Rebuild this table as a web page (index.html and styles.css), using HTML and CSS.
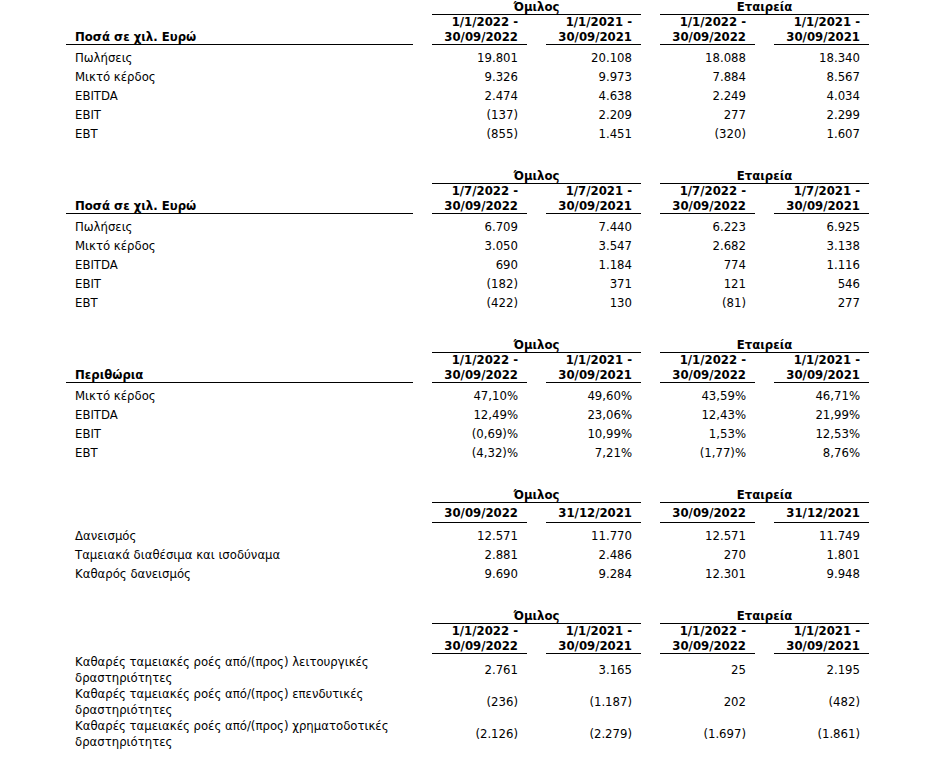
FILE: index.html
```html
<!DOCTYPE html>
<html lang="el">
<head>
<meta charset="utf-8">
<link rel="stylesheet" href="styles.css">
</head>
<body>
<div class="page">

<section class="tbl">
  <div class="blank"></div>
  <div class="grp">Όμιλος</div>
  <div class="grp">Εταιρεία</div>

  <div class="hlabel">Ποσά σε χιλ. Ευρώ</div>
  <div class="hcol">1/1/2022 -<br>30/09/2022</div>
  <div class="hcol">1/1/2021 -<br>30/09/2021</div>
  <div class="hcol">1/1/2022 -<br>30/09/2022</div>
  <div class="hcol">1/1/2021 -<br>30/09/2021</div>

  <div class="lbl">Πωλήσεις</div><div class="num">19.801</div><div class="num">20.108</div><div class="num">18.088</div><div class="num">18.340</div>
  <div class="lbl">Μικτό κέρδος</div><div class="num">9.326</div><div class="num">9.973</div><div class="num">7.884</div><div class="num">8.567</div>
  <div class="lbl">EBITDA</div><div class="num">2.474</div><div class="num">4.638</div><div class="num">2.249</div><div class="num">4.034</div>
  <div class="lbl">EBIT</div><div class="num">(137)</div><div class="num">2.209</div><div class="num">277</div><div class="num">2.299</div>
  <div class="lbl">EBT</div><div class="num">(855)</div><div class="num">1.451</div><div class="num">(320)</div><div class="num">1.607</div>
</section>

<section class="tbl">
  <div class="blank"></div>
  <div class="grp">Όμιλος</div>
  <div class="grp">Εταιρεία</div>

  <div class="hlabel">Ποσά σε χιλ. Ευρώ</div>
  <div class="hcol">1/7/2022 -<br>30/09/2022</div>
  <div class="hcol">1/7/2021 -<br>30/09/2021</div>
  <div class="hcol">1/7/2022 -<br>30/09/2022</div>
  <div class="hcol">1/7/2021 -<br>30/09/2021</div>

  <div class="lbl">Πωλήσεις</div><div class="num">6.709</div><div class="num">7.440</div><div class="num">6.223</div><div class="num">6.925</div>
  <div class="lbl">Μικτό κέρδος</div><div class="num">3.050</div><div class="num">3.547</div><div class="num">2.682</div><div class="num">3.138</div>
  <div class="lbl">EBITDA</div><div class="num">690</div><div class="num">1.184</div><div class="num">774</div><div class="num">1.116</div>
  <div class="lbl">EBIT</div><div class="num">(182)</div><div class="num">371</div><div class="num">121</div><div class="num">546</div>
  <div class="lbl">EBT</div><div class="num">(422)</div><div class="num">130</div><div class="num">(81)</div><div class="num">277</div>
</section>

<section class="tbl">
  <div class="blank"></div>
  <div class="grp">Όμιλος</div>
  <div class="grp">Εταιρεία</div>

  <div class="hlabel">Περιθώρια</div>
  <div class="hcol">1/1/2022 -<br>30/09/2022</div>
  <div class="hcol">1/1/2021 -<br>30/09/2021</div>
  <div class="hcol">1/1/2022 -<br>30/09/2022</div>
  <div class="hcol">1/1/2021 -<br>30/09/2021</div>

  <div class="lbl">Μικτό κέρδος</div><div class="num">47,10%</div><div class="num">49,60%</div><div class="num">43,59%</div><div class="num">46,71%</div>
  <div class="lbl">EBITDA</div><div class="num">12,49%</div><div class="num">23,06%</div><div class="num">12,43%</div><div class="num">21,99%</div>
  <div class="lbl">EBIT</div><div class="num">(0,69)%</div><div class="num">10,99%</div><div class="num">1,53%</div><div class="num">12,53%</div>
  <div class="lbl">EBT</div><div class="num">(4,32)%</div><div class="num">7,21%</div><div class="num">(1,77)%</div><div class="num">8,76%</div>
</section>

<section class="tbl">
  <div class="blank"></div>
  <div class="grp">Όμιλος</div>
  <div class="grp">Εταιρεία</div>

  <div class="blank"></div>
  <div class="hcol single">30/09/2022</div>
  <div class="hcol single">31/12/2021</div>
  <div class="hcol single">30/09/2022</div>
  <div class="hcol single">31/12/2021</div>

  <div class="lbl">Δανεισμός</div><div class="num">12.571</div><div class="num">11.770</div><div class="num">12.571</div><div class="num">11.749</div>
  <div class="lbl">Ταμειακά διαθέσιμα και ισοδύναμα</div><div class="num">2.881</div><div class="num">2.486</div><div class="num">270</div><div class="num">1.801</div>
  <div class="lbl">Καθαρός δανεισμός</div><div class="num">9.690</div><div class="num">9.284</div><div class="num">12.301</div><div class="num">9.948</div>
</section>

<section class="tbl cash">
  <div class="blank"></div>
  <div class="grp">Όμιλος</div>
  <div class="grp">Εταιρεία</div>

  <div class="blank"></div>
  <div class="hcol">1/1/2022 -<br>30/09/2022</div>
  <div class="hcol">1/1/2021 -<br>30/09/2021</div>
  <div class="hcol">1/1/2022 -<br>30/09/2022</div>
  <div class="hcol">1/1/2021 -<br>30/09/2021</div>

  <div class="lbl tall">Καθαρές ταμειακές ροές από/(προς) λειτουργικές<br>δραστηριότητες</div><div class="num tall">2.761</div><div class="num tall">3.165</div><div class="num tall">25</div><div class="num tall">2.195</div>
  <div class="lbl tall">Καθαρές ταμειακές ροές από/(προς) επενδυτικές<br>δραστηριότητες</div><div class="num tall">(236)</div><div class="num tall">(1.187)</div><div class="num tall">202</div><div class="num tall">(482)</div>
  <div class="lbl tall">Καθαρές ταμειακές ροές από/(προς) χρηματοδοτικές<br>δραστηριότητες</div><div class="num tall">(2.126)</div><div class="num tall">(2.279)</div><div class="num tall">(1.697)</div><div class="num tall">(1.861)</div>
</section>

</div>
</body>
</html>
```

FILE: styles.css
```css
html, body {
  margin: 0;
  padding: 0;
  background: #fff;
}

body {
  font-family: "DejaVu Sans", "Liberation Sans", sans-serif;
  font-stretch: condensed;
  font-size: 13px;
  color: #000;
}

.page {
  padding-left: 66px;
  display: flex;
  flex-direction: column;
  gap: 26px;
}

.tbl {
  display: grid;
  grid-template-columns: 347px repeat(4, 95px);
  column-gap: 19px;
}

.blank {
  min-height: 1px;
}

.grp {
  grid-column: span 2;
  text-align: center;
  font-weight: bold;
  line-height: 14px;
  border-bottom: 1px solid #000;
}

.hlabel {
  display: flex;
  align-items: flex-end;
  padding-left: 9px;
  margin-bottom: 3px;
  font-weight: bold;
  line-height: 14.5px;
  border-bottom: 1px solid #000;
}

.hcol {
  text-align: right;
  padding-right: 9px;
  margin-bottom: 3px;
  font-weight: bold;
  line-height: 14.5px;
  border-bottom: 1px solid #000;
}

.hcol.single {
  line-height: 19px;
}

.cash .hcol {
  margin-bottom: 0;
}

.lbl {
  padding-left: 9px;
  line-height: 19px;
  white-space: nowrap;
}

.num {
  text-align: right;
  padding-right: 9px;
  line-height: 19px;
}

.lbl.tall {
  line-height: 16px;
}

.num.tall {
  line-height: 32px;
}
```
